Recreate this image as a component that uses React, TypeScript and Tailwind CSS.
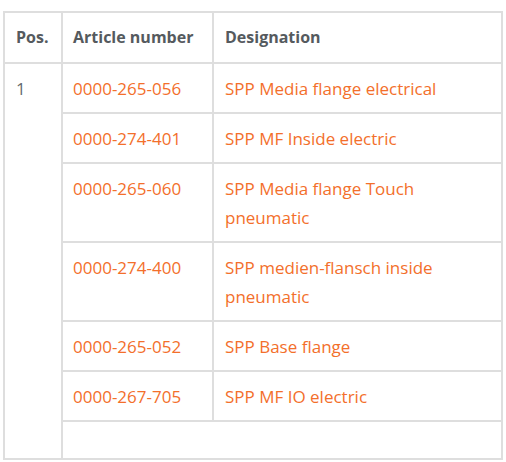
import React from "react";

const rows: { art: string; des: string[] }[] = [
  { art: "0000-265-056", des: ["SPP Media flange electrical"] },
  { art: "0000-274-401", des: ["SPP MF Inside electric"] },
  { art: "0000-265-060", des: ["SPP Media flange Touch", "pneumatic"] },
  { art: "0000-274-400", des: ["SPP medien-flansch inside", "pneumatic"] },
  { art: "0000-265-052", des: ["SPP Base flange"] },
  { art: "0000-267-705", des: ["SPP MF IO electric"] },
];

const th = "border-2 border-[#dedede] text-left font-bold text-[#555a5e] py-[10px] align-top whitespace-nowrap text-[16px]";
const td = "border-2 border-[#dedede] py-[9.5px] align-top";

export default function App() {
  return (
    <div className="w-[506px] h-[462px] bg-white overflow-hidden pt-[11px] pl-[3px]" style={{ fontFamily: '"Open Sans", sans-serif' }}>
      <table className="border-collapse table-fixed w-[500px] text-[17px] leading-[29px]">
        <colgroup>
          <col className="w-[58px]" />
          <col className="w-[151px]" />
          <col />
        </colgroup>
        <thead>
          <tr>
            <th className={`${th} pl-[11px] pr-[4px]`}>Pos.</th>
            <th className={`${th} pl-[10px] pr-[4px]`}>Article number</th>
            <th className={`${th} pl-[11px] pr-[4px]`}>Designation</th>
          </tr>
        </thead>
        <tbody>
          {rows.map((r, i) => (
            <tr key={r.art}>
              {i === 0 && (
                <td rowSpan={7} className={`${td} text-[#666a6e] pl-[11px] pr-[4px]`}>1</td>
              )}
              <td className={`${td} text-[#f36f2b] pl-[10px] pr-[4px] whitespace-nowrap`}>{r.art}</td>
              <td className={`${td} text-[#f36f2b] pl-[11px] pr-[4px]`}>
                {r.des.map((d, j) => (
                  <div key={j}>{d}</div>
                ))}
              </td>
            </tr>
          ))}
          <tr>
            <td colSpan={2} className="border-2 border-[#dedede] h-[38px]"></td>
          </tr>
        </tbody>
      </table>
    </div>
  );
}
